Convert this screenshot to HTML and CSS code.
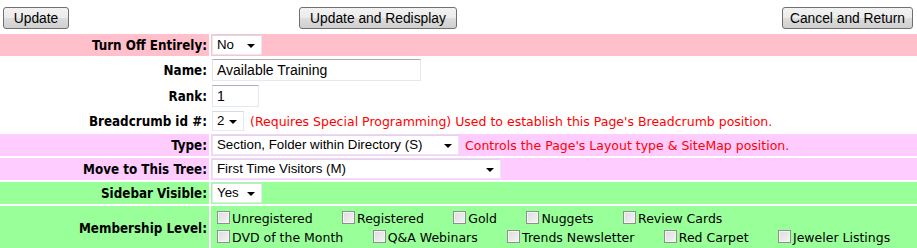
FILE: index.html
```html
<!DOCTYPE html>
<html lang="en">
<head>
    <meta charset="UTF-8">
    <title>Edit Page</title>
    <link rel="stylesheet" href="styles.css">
</head>
<body>
    <div class="toolbar">
        <button type="button" class="btn btnUpdate">Update</button>
        <button type="button" class="btn btnRedisplay">Update and Redisplay</button>
        <button type="button" class="btn btnCancel">Cancel and Return</button>
    </div>

    <table class="editTable">
        <tr class="pink">
            <td class="lbl">Turn Off Entirely:</td>
            <td class="val"><span class="sel w50">No</span></td>
        </tr>
        <tr class="tall">
            <td class="lbl">Name:</td>
            <td class="val"><input class="txt nameBox" type="text" value="Available Training"></td>
        </tr>
        <tr class="tall">
            <td class="lbl">Rank:</td>
            <td class="val"><input class="txt rankBox" type="text" value="1"></td>
        </tr>
        <tr>
            <td class="lbl">Breadcrumb id #:</td>
            <td class="val"><span class="sel w32">2</span><span class="note">(Requires Special Programming) Used to establish this Page's Breadcrumb position.</span></td>
        </tr>
        <tr class="violet">
            <td class="lbl">Type:</td>
            <td class="val"><span class="sel w247">Section, Folder within Directory (S)</span><span class="note">Controls the Page's Layout type &amp; SiteMap position.</span></td>
        </tr>
        <tr class="violet">
            <td class="lbl">Move to This Tree:</td>
            <td class="val"><span class="sel w289">First Time Visitors (M)</span></td>
        </tr>
        <tr class="green">
            <td class="lbl">Sidebar Visible:</td>
            <td class="val"><span class="sel w50">Yes</span></td>
        </tr>
        <tr class="green">
            <td class="lbl">Membership Level:</td>
            <td class="val checks">
                <div class="checkLine">
                    <label class="item"><input type="checkbox">Unregistered</label>
                    <label class="item"><input type="checkbox">Registered</label>
                    <label class="item"><input type="checkbox">Gold</label>
                    <label class="item"><input type="checkbox">Nuggets</label>
                    <label class="item"><input type="checkbox">Review Cards</label>
                </div>
                <div class="checkLine">
                    <label class="item"><input type="checkbox">DVD of the Month</label>
                    <label class="item"><input type="checkbox">Q&amp;A Webinars</label>
                    <label class="item"><input type="checkbox">Trends Newsletter</label>
                    <label class="item"><input type="checkbox">Red Carpet</label>
                    <label class="item"><input type="checkbox">Jeweler Listings</label>
                </div>
            </td>
        </tr>
    </table>
</body>
</html>
```

FILE: styles.css
```css
body {
    margin: 0;
    background-color: #fff;
    font-family: "DejaVu Sans", Verdana, sans-serif;
    font-size: 12.5px;
    color: #000;
}

.toolbar {
    display: flex;
    padding: 7px 4px 0 3px;
    height: 22px;
}

.btn {
    height: 22px;
    padding: 0;
    font-family: "Liberation Sans", Arial, sans-serif;
    font-size: 13.8px;
    color: #000;
    border: 1px solid #707070;
    border-radius: 3px;
    background: linear-gradient(#f2f2f2 0%, #ebebeb 50%, #dddddd 51%, #cfcfcf 100%);
}

.btnUpdate {
    width: 66px;
    margin-right: 230px;
}

.btnRedisplay {
    width: 158px;
}

.btnCancel {
    width: 131px;
    margin-left: auto;
}

.editTable {
    table-layout: fixed;
    border-collapse: separate;
    border-spacing: 2px;
    margin: 3px -2px 0 -2px;
    width: calc(100% + 4px);
}

.editTable td {
    padding: 1px;
    height: 20px;
}

.editTable tr.tall td {
    height: 22px;
}

.lbl {
    width: 206px;
    padding-right: 2px !important;
    text-align: right;
    font-family: "DejaVu Sans Condensed", "DejaVu Sans", sans-serif;
    font-size: 13.3px;
    font-weight: bold;
    white-space: nowrap;
}

.val {
    white-space: nowrap;
}

.pink td {
    background-color: #ffc0cb;
}

.violet td {
    background-color: #ffccff;
}

.green td {
    background-color: #99ff99;
}

.sel {
    position: relative;
    display: inline-block;
    vertical-align: middle;
    box-sizing: border-box;
    height: 20px;
    line-height: 18px;
    padding-left: 4px;
    background-color: #fff;
    border: 1px solid #e3e9ef;
    border-top-color: #d6dbe3;
    font-family: "Liberation Sans", Arial, sans-serif;
    font-size: 13.3px;
}

.sel::after {
    content: "";
    position: absolute;
    right: 6px;
    top: 8px;
    border-left: 4px solid transparent;
    border-right: 4px solid transparent;
    border-top: 4px solid #000;
}

.w32 { width: 32px; }
.w50 { width: 50px; }
.w247 { width: 247px; }
.w289 { width: 289px; }

.txt {
    box-sizing: border-box;
    height: 22px;
    margin: 0;
    padding: 0 4px;
    vertical-align: middle;
    font-family: "Liberation Sans", Arial, sans-serif;
    font-size: 14px;
    border: 1px solid #e3e9ef;
    border-top-color: #abadb3;
    border-left-color: #e2e3ea;
}

.nameBox {
    width: 209px;
}

.rankBox {
    width: 47px;
}

.note {
    margin-left: 6px;
    color: #ff0000;
    vertical-align: middle;
}

.checks {
    padding-top: 3px !important;
    padding-bottom: 3px !important;
}

.checkLine {
    display: flex;
    line-height: 19px;
    height: 19px;
}

.item {
    margin-right: 24.4px;
}

.item input {
    -webkit-appearance: none;
    appearance: none;
    width: 13px;
    height: 13px;
    margin: 0 2px 0 5px;
    vertical-align: -1px;
    border: 1px solid #8f8f8f;
    background: linear-gradient(135deg, #dcdcdc 0%, #f4f4f4 100%);
    box-shadow: inset 0 0 0 1px #f4f4f4;
}
```
